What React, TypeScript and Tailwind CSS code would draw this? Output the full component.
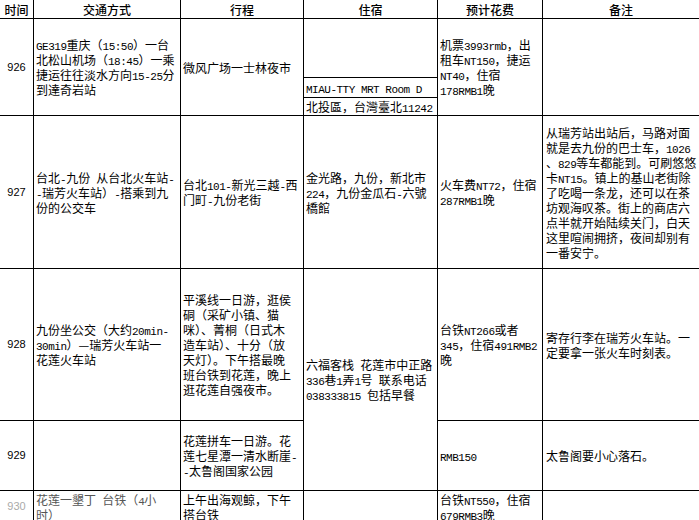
import React from "react";

function mix(s: string) {
  const parts = s.split(/([ -~]+)/);
  return parts.map((p, i) =>
    /^[ -~]+$/.test(p) ? (
      <span key={i} className="font-['Liberation_Mono'] text-[11px] tracking-[-0.5px]">
        {p}
      </span>
    ) : (
      <React.Fragment key={i}>{p}</React.Fragment>
    )
  );
}

function Lines({ lines }: { lines: string[] }) {
  return (
    <div className="flex flex-col">
      {lines.map((l, i) => (
        <div key={i} className="leading-[15px] h-[15px] whitespace-nowrap">
          {mix(l)}
        </div>
      ))}
    </div>
  );
}

const cell = "bg-white flex items-center pl-[2px] min-w-0";
const timeCell = "bg-white flex items-center justify-center text-[11px] font-['Liberation_Sans']";
const head = "bg-white flex items-center justify-center leading-[15px] font-medium";

export default function App() {
  return (
    <div className="w-[699px] h-[520px] overflow-hidden bg-white text-black text-[12px] font-['Noto_Sans_CJK_SC',sans-serif]">
      <div className="grid grid-cols-[33px_146px_122px_133px_104px_1fr] grid-rows-[18px_96px_152px_151px_69px_31px] gap-px bg-black">
        {/* header */}
        <div className={head}>时间</div>
        <div className={head}>交通方式</div>
        <div className={head}>行程</div>
        <div className={head}>住宿</div>
        <div className={head}>预计花费</div>
        <div className={head}>备注</div>

        {/* 926 */}
        <div className={timeCell}>926</div>
        <div className={cell}>
          <Lines
            lines={[
              "GE319重庆（15:50）一台",
              "北松山机场（18:45）一乘",
              "捷运往往淡水方向15-25分",
              "到達奇岩站",
            ]}
          />
        </div>
        <div className={cell}>
          <Lines lines={["微风广场一士林夜市"]} />
        </div>
        <div className="flex flex-col gap-px bg-black">
          <div className="flex-1 bg-white" />
          <div className="h-[19px] bg-white flex items-center pl-[2px]">
            <Lines lines={["MIAU-TTY MRT Room D"]} />
          </div>
          <div className="h-[17px] bg-white flex items-center pl-[2px]">
            <Lines lines={["北投區，台灣臺北11242"]} />
          </div>
        </div>
        <div className={cell}>
          <Lines lines={["机票3993rmb，出", "租车NT150，捷运", "NT40，住宿", "178RMB1晚"]} />
        </div>
        <div className={cell} />

        {/* 927 */}
        <div className={timeCell}>927</div>
        <div className={cell}>
          <Lines lines={["台北-九份 从台北火车站-", "-瑞芳火车站）-搭乘到九", "份的公交车"]} />
        </div>
        <div className={cell}>
          <Lines lines={["台北101-新光三越-西", "门町-九份老街"]} />
        </div>
        <div className={cell}>
          <Lines lines={["金光路，九份，新北市", "224，九份金瓜石-六號", "橋館"]} />
        </div>
        <div className={cell}>
          <Lines lines={["火车费NT72，住宿", "287RMB1晚"]} />
        </div>
        <div className={cell + " pl-[3px]"}>
          <Lines
            lines={[
              "从瑞芳站出站后，马路对面",
              "就是去九份的巴士车，1026",
              "、829等车都能到。可刷悠悠",
              "卡NT15。镇上的基山老街除",
              "了吃喝一条龙，还可以在茶",
              "坊观海叹茶。街上的商店六",
              "点半就开始陆续关门，白天",
              "这里喧闹拥挤，夜间却别有",
              "一番安宁。",
            ]}
          />
        </div>

        {/* 928 */}
        <div className={timeCell}>928</div>
        <div className={cell}>
          <Lines lines={["九份坐公交（大约20min-", "30min）—瑞芳火车站一", "花莲火车站"]} />
        </div>
        <div className={cell}>
          <Lines
            lines={[
              "平溪线一日游，逛侯",
              "硐（采矿小镇、猫",
              "咪）、菁桐（日式木",
              "造车站）、十分（放",
              "天灯）。下午搭最晚",
              "班台铁到花莲，晚上",
              "逛花莲自强夜市。",
            ]}
          />
        </div>
        <div className={cell + " row-span-2"}>
          <Lines lines={["六福客栈 花莲市中正路", "336巷1弄1号 联系电话", "038333815  包括早餐"]} />
        </div>
        <div className={cell}>
          <Lines lines={["台铁NT266或者", "345，住宿491RMB2", "晚"]} />
        </div>
        <div className={cell + " pl-[3px]"}>
          <Lines lines={["寄存行李在瑞芳火车站。一", "定要拿一张火车时刻表。"]} />
        </div>

        {/* 929 */}
        <div className={timeCell}>929</div>
        <div className={cell} />
        <div className={cell}>
          <Lines lines={["花莲拼车一日游。花", "莲七星潭一清水断崖-", "-太鲁阁国家公园"]} />
        </div>
        <div className={cell}>
          <Lines lines={["RMB150"]} />
        </div>
        <div className={cell + " pl-[3px]"}>
          <Lines lines={["太鲁阁要小心落石。"]} />
        </div>

        {/* 930 */}
        <div className={timeCell + " text-[#aaaaaa]"}>930</div>
        <div className={cell + " text-[#555555]"}>
          <Lines lines={["花莲一墾丁  台铁（4小", "时）"]} />
        </div>
        <div className={cell}>
          <Lines lines={["上午出海观鲸，下午", "搭台铁"]} />
        </div>
        <div className={cell} />
        <div className={cell}>
          <Lines lines={["台铁NT550，住宿", "679RMB3晚"]} />
        </div>
        <div className={cell} />
      </div>
    </div>
  );
}
